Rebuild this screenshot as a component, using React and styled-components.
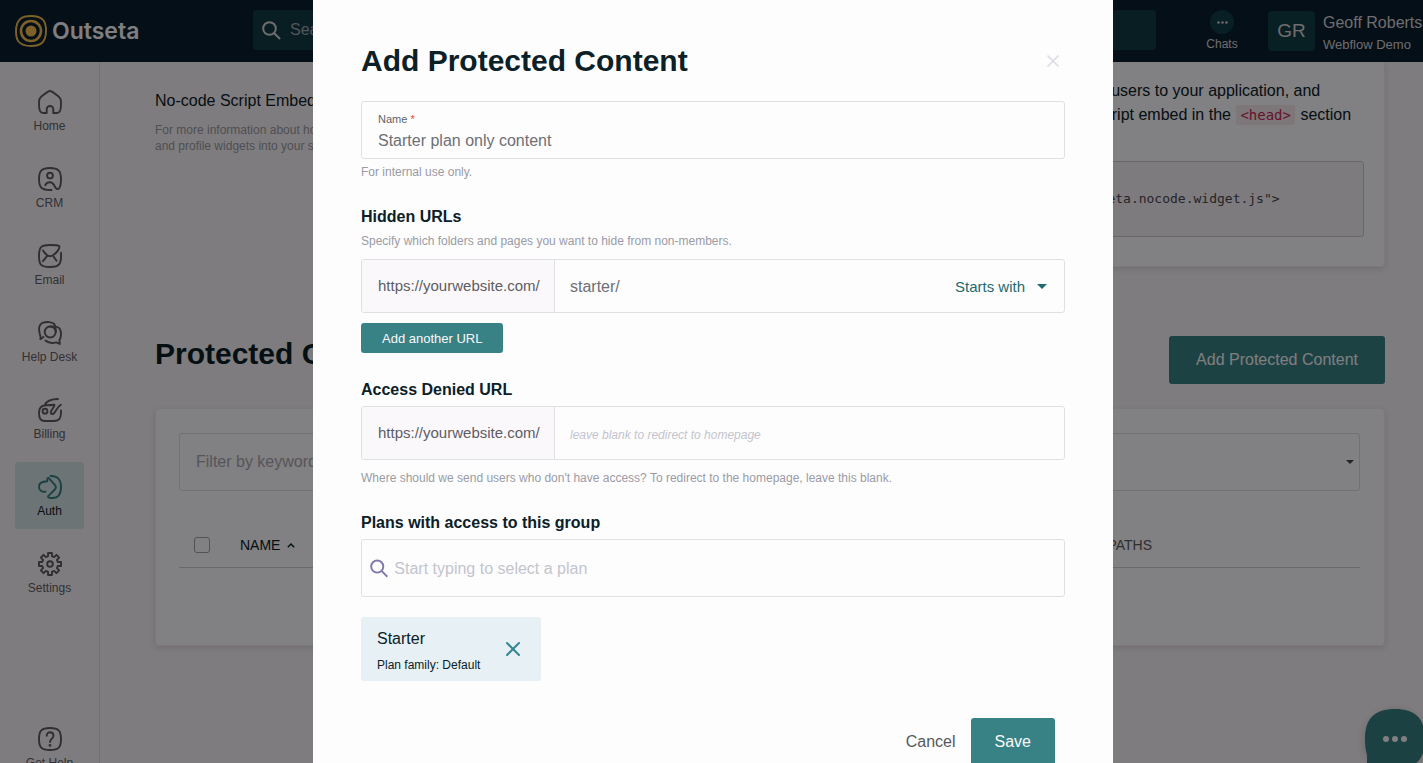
import React from 'react';
import styled, { createGlobalStyle } from 'styled-components';
import { X } from 'lucide-react';

const GlobalStyle = createGlobalStyle`
    * {
        box-sizing: border-box;
    }

    body {
        margin: 0;
        overflow: hidden;
        background-color: #f9f4f9;
        color: #0b2027;
        font-family: 'Liberation Sans', Arial, sans-serif;
        font-size: 16px;
        line-height: 24px;
    }

    button, input, select {
        font-family: inherit;
        font-size: 16px;
        margin: 0;
    }

    h1, h2, h3, p, pre {
        margin: 0;
    }
`;

/* ---------- top bar ---------- */

const TopBar = styled.header`
    display: flex;
    align-items: center;
    height: 62px;
    padding-left: 15px;
    background-color: #081e2d;
    color: #d9d6dc;
`;

const Brand = styled.a`
    display: flex;
    align-items: center;
    flex: none;
    gap: 5px;
    width: 238px;
    color: #fbf8fc;
    font-family: Inter, sans-serif;
    font-size: 23px;
    font-weight: 600;
    text-decoration: none;
`;

const SearchBox = styled.label`
    display: flex;
    align-items: center;
    flex: 1;
    gap: 9px;
    height: 40px;
    margin-bottom: 2px;
    padding: 0 9px;
    border-radius: 3px;
    background-color: #113b46;
`;

const SearchInput = styled.input`
    flex: 1;
    min-width: 0;
    padding: 0;
    border: none;
    outline: none;
    background: transparent;
    color: #d9d6dc;

    &::placeholder {
        color: #a3a6ae;
        opacity: 1;
    }
`;

const Chats = styled.a`
    display: flex;
    flex-direction: column;
    align-items: center;
    flex: none;
    gap: 2px;
    width: 112px;
    padding-left: 20px;
    color: #d9d6dc;
    font-size: 12px;
    line-height: 16px;
    text-decoration: none;
`;

const ChatDots = styled.span`
    display: grid;
    place-items: center;
    width: 24px;
    height: 24px;
    border-radius: 50%;
    background-color: #113f49;
`;

const Avatar = styled.div`
    display: grid;
    place-items: center;
    flex: none;
    width: 47px;
    height: 40px;
    border-radius: 4px;
    background-color: #113f46;
    font-size: 19px;
`;

const Account = styled.div`
    flex: none;
    width: 108px;
    padding: 5px 0 0 8px;
    white-space: nowrap;
    line-height: 22px;
`;

const AccountTeam = styled.div`
    font-size: 13px;
`;

/* ---------- side bar ---------- */

const Shell = styled.div`
    display: flex;
    height: calc(100vh - 62px);
    overflow: hidden;
`;

const SideBar = styled.nav`
    display: flex;
    flex-direction: column;
    align-items: center;
    flex: none;
    gap: 10px;
    width: 100px;
    padding-top: 15px;
    border-right: 1px solid #e2dde3;
`;

const NavItem = styled.a`
    display: flex;
    flex-direction: column;
    align-items: center;
    flex: none;
    gap: 4px;
    width: 69px;
    height: 67px;
    margin-top: ${props => (props.$last ? '98px' : '0')};
    padding-top: 13px;
    border-radius: 3px;
    background-color: ${props => (props.$active ? '#d4e4e8' : 'transparent')};
    color: ${props => (props.$active ? '#0b2027' : '#625f66')};
    font-size: 12px;
    line-height: 16px;
    text-decoration: none;
    white-space: nowrap;

    svg {
        flex: none;
        color: ${props => (props.$active ? '#358083' : '#5d5a61')};
    }
`;

/* ---------- page behind the dialog ---------- */

const Main = styled.main`
    flex: 1;
    min-width: 0;
    padding: 0 38px 0 55px;
`;

const Card = styled.section`
    border: 1px solid #f3eef4;
    border-radius: 4px;
    background-color: #fefbff;
    box-shadow: 0 2px 6px rgba(60, 50, 70, 0.15);
`;

const EmbedRow = styled.div`
    display: grid;
    grid-template-columns: 1fr 1fr;
`;

const EmbedIntro = styled.div`
    padding-top: 27px;
`;

const Hint = styled.p`
    color: #9a9ba4;
    font-size: 12px;
    line-height: 16px;
`;

const IntroHint = styled(Hint)`
    padding-top: 9px;
    white-space: nowrap;
`;

const EmbedCard = styled(Card)`
    padding: 17px 20px 29px;
    border-top: none;
    border-radius: 0 0 4px 4px;
    white-space: nowrap;
`;

const InlineCode = styled.code`
    margin: 0 1px;
    padding: 2px 4px;
    border-radius: 3px;
    background-color: #f7e9f0;
    color: #c7254e;
    font-family: 'DejaVu Sans Mono', monospace;
    font-size: 14px;
`;

const CodeBlock = styled.pre`
    margin-top: 34px;
    padding: 25px 18px;
    border: 1px solid #cdc9cf;
    border-radius: 3px;
    background-color: #f6f2f6;
    color: #49474d;
    font-family: 'DejaVu Sans Mono', monospace;
    font-size: 13px;
    overflow: hidden;
`;

const PageTitle = styled.h1`
    font-size: 30px;
    line-height: 36px;
`;

const SectionHead = styled.div`
    display: flex;
    align-items: flex-start;
    justify-content: space-between;
    padding: 69px 0 24px;
`;

const Button = styled.button`
    height: 48px;
    padding: 0 24px;
    border: none;
    border-radius: 3px;
    background-color: #388285;
    color: #fbf8fc;
`;

const WideButton = styled(Button)`
    padding: 0 27px;
`;

const SmallButton = styled(Button)`
    display: block;
    height: 30px;
    margin-top: 10px;
    padding: 0 21px;
    font-size: 13px;
`;

const ListCard = styled(Card)`
    height: 238px;
    padding: 24px 24px 24px 23px;
`;

const Filters = styled.div`
    display: grid;
    grid-template-columns: 1fr 1fr;
    gap: 24px;
`;

const FilterInput = styled.input`
    height: 58px;
    padding: 0 16px;
    border: 1px solid #e0dbe1;
    border-radius: 3px;
    background: transparent;

    &::placeholder {
        color: #aaa8b0;
        opacity: 1;
    }
`;

const FilterSelect = styled.div`
    display: flex;
    align-items: center;
    padding-right: 5px;
    border: 1px solid #e0dbe1;
    border-radius: 3px;
    color: #49474d;
`;

const PlainSelect = styled.select`
    flex: ${props => (props.$grow ? '1' : 'none')};
    padding: 0;
    border: none;
    outline: none;
    appearance: none;
    background: transparent;
    color: #1b6b70;
    font-size: 15px;
`;

const Table = styled.table`
    width: 100%;
    margin-top: 32px;
    border-collapse: collapse;
    table-layout: fixed;

    th {
        height: 44px;
        padding: 1px 0 0;
        border-bottom: 1px solid #d3ced4;
        color: #5d5a61;
        font-size: 14px;
        font-weight: 400;
        text-align: left;
    }
`;

const CheckCell = styled.th`
    width: 61px;
`;

const PathsCell = styled.th`
    width: 284px;
`;

const Check = styled.input`
    display: block;
    appearance: none;
    width: 16px;
    height: 16px;
    margin-left: 15px;
    border: 1px solid #a3a0a7;
    border-radius: 3px;
`;

const SortButton = styled.button`
    display: flex;
    align-items: center;
    gap: 7px;
    padding: 0;
    border: none;
    background: none;
    color: #0b2027;
    font-size: 14px;
`;

const ChatWidget = styled.button`
    position: fixed;
    right: -2px;
    bottom: -6px;
    width: 60px;
    height: 60px;
    padding: 0;
    border: none;
    border-radius: 50%;
    background: none;
    box-shadow: 0 2px 10px rgba(60, 40, 60, 0.25);

    svg {
        display: block;
    }
`;

/* ---------- dialog ---------- */

const Overlay = styled.div`
    position: fixed;
    inset: 0;
    display: flex;
    justify-content: center;
    padding-left: 3px;
    overflow: hidden;
    background-color: rgba(0, 0, 0, 0.49);
`;

const Dialog = styled.form`
    flex: none;
    width: 800px;
    max-width: 100%;
    min-height: 100%;
    height: max-content;
    padding: 43px 48px;
    background-color: #fdfdfe;
`;

const DialogHead = styled.div`
    display: flex;
    align-items: center;
    justify-content: space-between;
    margin-bottom: 22px;
`;

const CloseButton = styled.button`
    display: flex;
    padding: 2px;
    border: none;
    background: none;
    color: ${props => props.$color};
`;

const Field = styled.label`
    display: flex;
    flex-direction: column;
    justify-content: center;
    height: 58px;
    padding: 6px 16px 0;
    border: 1px solid #e0dfe3;
    border-radius: 3px;
    color: #5f6468;
    font-size: 11px;
    line-height: 16px;
`;

const Required = styled.span`
    color: #f0453a;
`;

const TextInput = styled.input`
    width: 100%;
    min-width: 0;
    height: ${props => (props.$tall ? '100%' : '28px')};
    padding: ${props => (props.$tall ? '1px 0 0' : '0')};
    border: none;
    outline: none;
    background: transparent;
    color: #6d6f74;

    &::placeholder {
        color: #c3c4cd;
        font-size: ${props => (props.$small ? '12px' : '16px')};
        font-style: ${props => (props.$small ? 'italic' : 'normal')};
        opacity: 1;
    }
`;

const Heading = styled.h3`
    margin: 25px 0 4px;
    font-size: 16px;
    line-height: 24px;
`;

const FieldHint = styled(Hint)`
    margin-top: ${props => props.$gap};
`;

const UrlRow = styled.div`
    display: flex;
    align-items: center;
    height: 54px;
    margin-top: ${props => (props.$spaced ? '10px' : '0')};
    padding-right: 17px;
    border: 1px solid #e0dfe3;
    border-radius: 3px;
`;

const UrlPrefix = styled.label`
    display: flex;
    align-items: center;
    flex: none;
    width: 193px;
    height: 100%;
    margin-right: 15px;
    padding-left: 16px;
    border-right: 1px solid #e0dfe3;
    border-radius: 2px 0 0 2px;
    background-color: #fbf8fc;
    color: #5d5d62;
    font-size: 15px;
`;

const MatchMode = styled.span`
    display: flex;
    align-items: center;
    flex: none;
    gap: 11px;
    color: #1b6b70;
`;

const PlanSearch = styled.label`
    display: flex;
    align-items: center;
    gap: 6px;
    height: 58px;
    padding: 0 8px;
    border: 1px solid #e0dfe3;
    border-radius: 3px;
    color: #8078a6;
`;

const PlanChip = styled.div`
    display: flex;
    align-items: center;
    justify-content: space-between;
    width: 180px;
    height: 64px;
    margin-top: 20px;
    padding: 0 14px 0 16px;
    border-radius: 3px;
    background-color: #e7f0f4;
`;

const PlanName = styled.div`
    padding-top: 4px;
`;

const PlanFamily = styled.div`
    padding-top: 4px;
    font-size: 12px;
    line-height: 20px;
`;

const Actions = styled.div`
    display: flex;
    justify-content: flex-end;
    gap: 15px;
    padding: 37px 10px 0 0;
`;

const CancelButton = styled.button`
    padding: 0;
    border: none;
    background: none;
    color: #55585c;
`;

/* ---------- icons ---------- */

const NavIcon = ({ children }) => (
    <svg
        width="24"
        height="24"
        viewBox="0 0 24 24"
        fill="none"
        stroke="currentColor"
        strokeWidth="1.9"
        strokeLinecap="round"
        strokeLinejoin="round"
        aria-hidden="true"
    >
        {children}
    </svg>
);

const SearchIcon = () => (
    <svg width="19" height="19" viewBox="0 0 19 19" fill="none" stroke="currentColor" strokeWidth="2" aria-hidden="true">
        <circle cx="7.500" cy="7.500" r="6.300" />
        <path d="M12 12L18 18" />
    </svg>
);

const Caret = ({ width = 10 }) => (
    <svg width={width} height={width / 2} viewBox="0 0 10 5" aria-hidden="true">
        <path d="M0 0h10L5 5z" fill="currentColor" />
    </svg>
);

const Logo = () => (
    <svg width="32" height="32" viewBox="0 0 32 32" fill="none" stroke="#f5bf50" aria-hidden="true">
        <path
            d="M16 1C22 1 26 2.200 28.600 5.500C30.500 8 31 12 31 16C31 22 29.800 25.500 26.500 28.300C24 30.500 20 31 16 31C10 31 6.300 29.800 3.500 26.500C1.500 24 1 20 1 16C1 10 2.200 6.500 5.500 3.700C8 1.500 12 1 16 1Z"
            strokeWidth="1.900"
        />
        <circle cx="16" cy="16" r="10" strokeWidth="2.600" />
        <circle cx="16" cy="16" r="5.500" fill="#f5bf50" stroke="none" />
    </svg>
);

const gearPath = () => {
    const points = [];
    for (let i = 0; i < 8; i += 1) {
        [[-14, 8.1], [-10, 11.2], [10, 11.2], [14, 8.1]].forEach(([offset, radius]) => {
            const angle = ((i * 45 + offset) * Math.PI) / 180;
            points.push(`${(12 + radius * Math.sin(angle)).toFixed(2)} ${(12 - radius * Math.cos(angle)).toFixed(2)}`);
        });
    }
    return `M${points.join('L')}Z`;
};

const navItems = [
    {
        label: 'Home',
        icon: <path d="M8.700 23V19.300a3.300 3.300 0 0 1 6.600 0V23H18.500C22 23 23 20.500 23 14C23 9 22.800 8.500 20 6C17.500 4 13.500 1 12 1S6.500 4 4 6C1.200 8.500 1 9 1 14C1 20.500 2 23 5.500 23Z" />,
    },
    {
        label: 'CRM',
        icon: (
            <>
                <circle cx="12" cy="8.600" r="2.900" />
                <path d="M13.500 23C4 23.300 1 21 1 12C1 3.500 4 1 12 1S23 3.500 23 12C23 16 22.800 19 21.200 21.200C19.700 23 18.200 22 17 19.800C15.800 17.300 14.500 15.300 12 15.300C9.600 15.300 8 16.600 7.300 18.200" />
            </>
        ),
    },
    {
        label: 'Email',
        icon: <path d="M23 8.800C23.600 20 21.500 23 12 23C3 23 1 21 1 12C1 3 3 1 12 1C17 1 20 1 21.200 2C22.300 4 19 8.500 15 11.300C13 12.500 11 12.500 9.200 11.300C7.500 10 6 8.200 5 6.500M9.200 11.800L5 17.200M15 11.800L18.500 16.800" />,
    },
    {
        label: 'Help Desk',
        icon: (
            <>
                <circle cx="12.200" cy="11" r="5.500" />
                <path d="M5.500 16L2.300 18.300C3 16.500 2.500 15 1.800 13C.5 8 .8 3.500 4.500 1.800C8.500.6 14 .7 16.300 3C17.600 4.700 18 7.500 17.700 11" />
                <path d="M12.200 5.500C17 5 20 5.500 21.600 7.500C23.700 11 23.300 16 21.500 19L21.800 23L18.300 21.400C14 22.400 10 22 7.500 19.500" />
            </>
        ),
    },
    {
        label: 'Billing',
        icon: (
            <>
                <circle cx="7" cy="13.200" r="2.400" />
                <path d="M20 1C13 1 8.500 2.500 6.500 7.300M23 12.500C23.300 20 21.800 23 15.500 23H8C2.200 23 1 20.500 1 15C1 9.500 3 7.300 8 7.300C11.500 7.300 14 7.200 16.500 6.800C16 9.500 13.500 11.500 12.900 13.800C12.300 16.500 14.800 16.800 16.500 14.600C18.500 12 20 8.500 22.800 6.800" />
            </>
        ),
    },
    {
        label: 'Auth',
        active: true,
        icon: <path d="M12.500 1C19 .8 23 4 23 12C23 19.500 20 23 14.500 23C10 23.200 9.200 22 11 20.300L16.800 14.500C18.300 12.800 18.300 11.500 16.800 9.800L11.500 3.800C9.800 2 9 3 9.300 6.300C4.500 6.500 1 7.500 1 11.500C1 15.500 3.500 17 7.500 16.800" />,
    },
    {
        label: 'Settings',
        icon: (
            <>
                <path d={gearPath()} />
                <circle cx="12" cy="12" r="2.800" />
            </>
        ),
    },
    {
        label: 'Get Help',
        last: true,
        icon: (
            <>
                <path d="M12 1C20.500 1 23 3.500 23 12S20.500 23 12 23S1 20.500 1 12S3.500 1 12 1Z" />
                <path d="M8.700 8.800C8.700 3.900 15.500 4.200 15.500 8.700C15.500 11.500 12 11.800 12 15" />
                <circle cx="12" cy="18.400" r=".5" fill="currentColor" />
            </>
        ),
    },
];

const Header = () => (
    <TopBar>
        <Brand href="#">
            <Logo />
            Outseta
        </Brand>
        <SearchBox>
            <SearchIcon />
            <SearchInput type="search" placeholder="Search" aria-label="Search" />
        </SearchBox>
        <Chats href="#chats">
            <ChatDots>
                <svg width="11" height="3" viewBox="0 0 11 3" fill="currentColor" aria-hidden="true">
                    <circle cx="1.500" cy="1.500" r="1.200" />
                    <circle cx="5.500" cy="1.500" r="1.200" />
                    <circle cx="9.500" cy="1.500" r="1.200" />
                </svg>
            </ChatDots>
            Chats
        </Chats>
        <Avatar>GR</Avatar>
        <Account>
            Geoff Roberts
            <AccountTeam>Webflow Demo</AccountTeam>
        </Account>
    </TopBar>
);

const Page = () => (
    <Main>
        <EmbedRow>
            <EmbedIntro>
                <p>No-code Script Embed</p>
                <IntroHint>
                    For more information about how to embed login
                    <br />
                    and profile widgets into your site, see the docs.
                </IntroHint>
            </EmbedIntro>
            <EmbedCard>
                <p>
                    Use that to sign up, log in and onboard more users to your application, and
                    <br />
                    manage access. To get started, place your script embed in the <InlineCode>&lt;head&gt;</InlineCode> section
                </p>
                <CodeBlock>{'<script src="//static.outseta.com/outseta.nocode.widget.js">'}</CodeBlock>
            </EmbedCard>
        </EmbedRow>

        <SectionHead>
            <PageTitle>Protected Content</PageTitle>
            <WideButton type="button">Add Protected Content</WideButton>
        </SectionHead>

        <ListCard>
            <Filters>
                <FilterInput placeholder="Filter by keyword" aria-label="Filter by keyword" />
                <FilterSelect>
                    <PlainSelect $grow aria-label="Filter by plan">
                        <option>All plans</option>
                    </PlainSelect>
                    <Caret width={8} />
                </FilterSelect>
            </Filters>
            <Table>
                <thead>
                    <tr>
                        <CheckCell>
                            <Check type="checkbox" aria-label="Select all" />
                        </CheckCell>
                        <th>
                            <SortButton type="button">
                                NAME
                                <svg width="8" height="5" viewBox="0 0 8 5" fill="none" stroke="currentColor" strokeWidth="1.400" aria-hidden="true">
                                    <path d="M.8 4.300L4 1L7.200 4.300" />
                                </svg>
                            </SortButton>
                        </th>
                        <PathsCell>URL PATHS</PathsCell>
                    </tr>
                </thead>
            </Table>
        </ListCard>
    </Main>
);

const ProtectedContentDialog = () => (
    <Overlay>
        <Dialog role="dialog" aria-labelledby="dialog-title" onSubmit={e => e.preventDefault()}>
            <DialogHead>
                <PageTitle as="h2" id="dialog-title">Add Protected Content</PageTitle>
                <CloseButton type="button" aria-label="Close" $color="#dddce1">
                    <X size={20} strokeWidth={2} />
                </CloseButton>
            </DialogHead>

            <Field>
                <span>
                    Name <Required>*</Required>
                </span>
                <TextInput defaultValue="Starter plan only content" />
            </Field>
            <FieldHint $gap="5px">For internal use only.</FieldHint>

            <Heading>Hidden URLs</Heading>
            <FieldHint $gap="4px">Specify which folders and pages you want to hide from non-members.</FieldHint>
            <UrlRow $spaced>
                <UrlPrefix htmlFor="hidden-url">https://yourwebsite.com/</UrlPrefix>
                <TextInput $tall id="hidden-url" defaultValue="starter/" />
                <MatchMode>
                    <PlainSelect aria-label="Match mode">
                        <option>Starts with</option>
                        <option>Equals</option>
                    </PlainSelect>
                    <Caret />
                </MatchMode>
            </UrlRow>
            <SmallButton type="button">Add another URL</SmallButton>

            <Heading>Access Denied URL</Heading>
            <UrlRow>
                <UrlPrefix htmlFor="denied-url">https://yourwebsite.com/</UrlPrefix>
                <TextInput $tall $small id="denied-url" placeholder="leave blank to redirect to homepage" />
            </UrlRow>
            <FieldHint $gap="10px">
                Where should we send users who don't have access? To redirect to the homepage, leave this blank.
            </FieldHint>

            <Heading>Plans with access to this group</Heading>
            <PlanSearch>
                <SearchIcon />
                <TextInput $tall placeholder="Start typing to select a plan" aria-label="Plans with access to this group" />
            </PlanSearch>
            <PlanChip>
                <div>
                    <PlanName>Starter</PlanName>
                    <PlanFamily>Plan family: Default</PlanFamily>
                </div>
                <CloseButton type="button" aria-label="Remove Starter" $color="#358794">
                    <X size={24} strokeWidth={2} />
                </CloseButton>
            </PlanChip>

            <Actions>
                <CancelButton type="button">Cancel</CancelButton>
                <Button type="submit">Save</Button>
            </Actions>
        </Dialog>
    </Overlay>
);

const App = () => (
    <>
        <GlobalStyle />
        <Header />
        <Shell>
            <SideBar>
                {navItems.map(item => (
                    <NavItem key={item.label} href="#" $active={item.active} $last={item.last}>
                        <NavIcon>{item.icon}</NavIcon>
                        {item.label}
                    </NavItem>
                ))}
            </SideBar>
            <Page />
        </Shell>
        <ChatWidget type="button" aria-label="Open chat">
            <svg width="60" height="60" viewBox="0 0 60 60" aria-hidden="true">
                <path d="M30 0C50 0 60 9 60 30S50 60 30 60H2V46C.6 41 0 36 0 30C0 9 10 0 30 0Z" fill="#358083" />
                <g fill="#fbf8fc">
                    <circle cx="21" cy="30" r="3" />
                    <circle cx="30" cy="30" r="3" />
                    <circle cx="39" cy="30" r="3" />
                </g>
            </svg>
        </ChatWidget>
        <ProtectedContentDialog />
    </>
);

export default App;
